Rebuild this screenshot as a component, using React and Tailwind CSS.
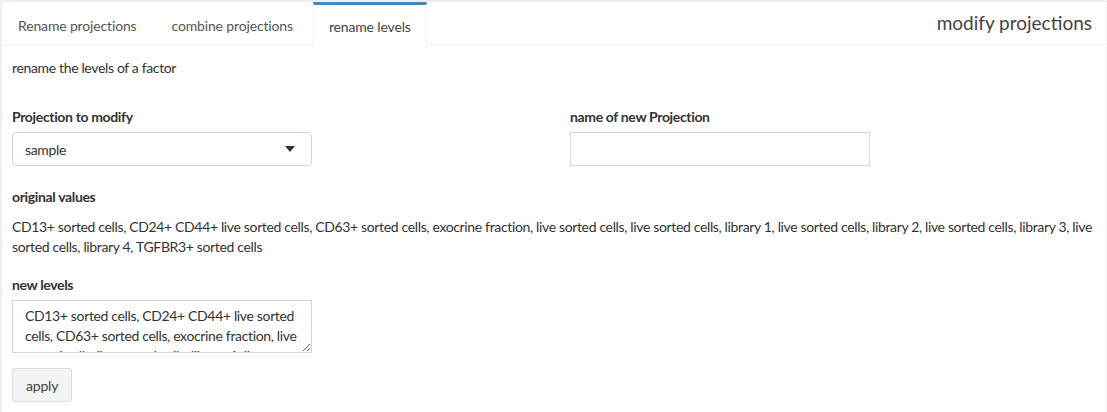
import React from 'react';

const tabs = ['Rename projections', 'combine projections', 'rename levels'];

const values =
  'CD13+ sorted cells, CD24+ CD44+ live sorted cells, CD63+ sorted cells, exocrine fraction, live sorted cells, live sorted cells, library 1, live sorted cells, library 2, live sorted cells, library 3, live sorted cells, library 4, TGFBR3+ sorted cells';

export default function App() {
  return (
    <div
      className="w-[1107px] h-[412px] bg-[#ecf0f5] pt-[2px] pl-[2px] overflow-hidden text-[14px] text-[#333] tracking-[-0.35px]"
      style={{ fontFamily: 'Lato, "Open Sans", sans-serif' }}
    >
      <div className="bg-white h-full rounded-tl-[3px] border-r border-[#f4f4f4]">
        {/* tab header */}
        <div className="flex items-stretch h-[43px] border-b border-[#f4f4f4] pl-[1px]">
          {tabs.map((t, i) => {
            const active = i === 2;
            return (
              <div
                key={t}
                className={
                  active
                    ? 'border-t-[3px] border-[#3c8dbc] border-x border-x-[#f4f4f4] bg-white px-[15px] pt-[2px] flex items-center text-[#444] tracking-[-0.15px] mb-[-1px] mr-[5px]'
                    : 'border-t-[3px] border-transparent px-[15px] pt-[2px] flex items-center text-[#555] tracking-[-0.15px] mr-[5px]'
                }
              >
                {t}
              </div>
            );
          })}
          <div className="ml-auto pr-[14px] flex items-center text-[19px] tracking-[0px] text-[#444]">modify projections</div>
        </div>

        {/* tab body */}
        <div className="pl-[10px] pt-[13px]">
          <p className="leading-[20px]">rename the levels of a factor</p>

          <div className="grid grid-cols-[558px_1fr] mt-[29px]">
            <div>
              <div className="font-bold leading-[20px]">Projection to modify</div>
              <div className="mt-[5px] w-[300px] h-[34px] border border-[#cfd3dc] rounded-[4px] flex items-center justify-between px-[12px]">
                <span>sample</span>
                <svg width="10" height="6" viewBox="0 0 10 6" className="mr-[4px]">
                  <path d="M0 0h10L5 6z" fill="#333" />
                </svg>
              </div>
            </div>
            <div>
              <div className="font-bold leading-[20px]">name of new Projection</div>
              <input className="mt-[5px] w-[300px] h-[34px] border border-[#d2d6de] outline-none block" />
            </div>
          </div>

          <div className="mt-[21px] font-bold leading-[20px]">original values</div>
          <p className="mt-[10px] leading-[20px] pr-[10px]">{values}</p>

          <div className="mt-[18px] font-bold leading-[20px]">new levels</div>
          <textarea
            readOnly
            value={values}
            className="mt-[5px] block w-[300px] h-[53px] border border-[#d2d6de] px-[12px] py-[5px] leading-[20px] outline-none resize-y overflow-hidden tracking-[-0.35px]"
          />
          <button className="mt-[15px] h-[34px] px-[13px] bg-[#f4f4f4] border border-[#ddd] rounded-[3px] text-[#444] tracking-[-0.2px]">
            apply
          </button>
        </div>
      </div>
    </div>
  );
}
